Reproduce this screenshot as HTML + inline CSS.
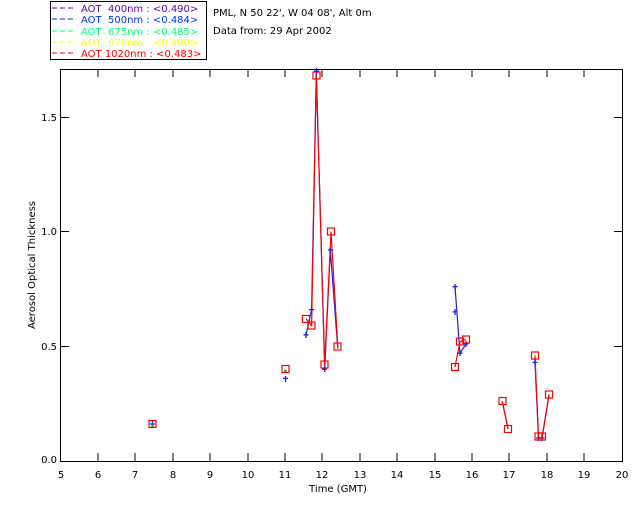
<!DOCTYPE html>
<html><head><style>
body{margin:0;background:#fff;width:640px;height:512px;overflow:hidden}
svg text{font-family:"DejaVu Sans","Liberation Sans",sans-serif;font-size:10px}
</style></head><body>
<svg width="640" height="512" xmlns="http://www.w3.org/2000/svg">
<rect x="0" y="0" width="640" height="512" fill="#fff"/>
<!-- legend -->
<rect x="50.5" y="1.5" width="156" height="58" fill="none" stroke="#000" stroke-width="1"/>
<g stroke-dasharray="5,3" stroke-width="1">
<line x1="52" y1="8" x2="75" y2="8" stroke="#6a00b0"/>
<line x1="52" y1="19" x2="75" y2="19" stroke="#0030ff"/>
<line x1="52" y1="31" x2="75" y2="31" stroke="#00ff80"/>
<line x1="52" y1="42" x2="75" y2="42" stroke="#ffff00"/>
<line x1="52" y1="53" x2="75" y2="53" stroke="#ff0000"/>
</g>
<text x="81" y="12" fill="#6a00b0" xml:space="preserve">AOT  400nm : &lt;0.490&gt;</text>
<text x="81" y="23" fill="#0030ff" xml:space="preserve">AOT  500nm : &lt;0.484&gt;</text>
<text x="81" y="35" fill="#00ff80" xml:space="preserve">AOT  675nm : &lt;0.485&gt;</text>
<text x="81" y="46" fill="#ffff00" xml:space="preserve">AOT  870nm : &lt;0.490&gt;</text>
<text x="81" y="57" fill="#ff0000" xml:space="preserve">AOT 1020nm : &lt;0.483&gt;</text>
<text x="213" y="16" fill="#000">PML, N 50 22', W 04 08', Alt 0m</text>
<text x="213" y="34" fill="#000">Data from: 29 Apr 2002</text>
<!-- axes -->
<rect x="60.5" y="69.5" width="562" height="392" fill="none" stroke="#000" stroke-width="1"/>
<g stroke="#000" stroke-width="1">
<path d="M98,461v-8M135,461v-8M173,461v-8M210,461v-8M248,461v-8M285,461v-8M322,461v-8M360,461v-8M397,461v-8M435,461v-8M472,461v-8M509,461v-8M547,461v-8M584,461v-8"/>
<path d="M98,70v7M135,70v7M173,70v7M210,70v7M248,70v7M285,70v7M322,70v7M360,70v7M397,70v7M435,70v7M472,70v7M509,70v7M547,70v7M584,70v7"/>
<path d="M61,346.5h8M61,231.5h8M61,117.5h8M622,346.5h-8M622,231.5h-8M622,117.5h-8"/>
</g>
<g fill="#000" text-anchor="middle">
<text x="61" y="478">5</text><text x="98" y="478">6</text><text x="135" y="478">7</text><text x="173" y="478">8</text><text x="210" y="478">9</text><text x="248" y="478">10</text><text x="285" y="478">11</text><text x="322" y="478">12</text><text x="360" y="478">13</text><text x="397" y="478">14</text><text x="435" y="478">15</text><text x="472" y="478">16</text><text x="509" y="478">17</text><text x="547" y="478">18</text><text x="584" y="478">19</text><text x="622" y="478">20</text>
<text x="338" y="492">Time (GMT)</text>
</g>
<g fill="#000" text-anchor="end">
<text x="57" y="463">0.0</text><text x="57" y="350">0.5</text><text x="57" y="235">1.0</text><text x="57" y="121">1.5</text>
</g>
<text transform="translate(35,265) rotate(-90)" text-anchor="middle" fill="#000" font-size="9">Aerosol Optical Thickness</text>
<!-- data -->
<g fill="none" stroke-width="1.2">
<polyline stroke="#2020e0" points="306,334.8 311.6,309.6 316.3,71 324.7,369.2 330.3,250 337.8,348.6"/>
<polyline stroke="#2020e0" points="455,286.7 460,353.2 466,344"/>
<polyline stroke="#2020e0" points="502.3,401 508,429"/>
<polyline stroke="#2020e0" points="535,362.4 538.5,438 542,438 549.1,394.5"/>
<polyline stroke="#ff0000" points="306,318.8 311.6,325.7 316.3,75.6 324.7,364.7 331,231.6 337.8,346.3"/>
<polyline stroke="#ff0000" points="455,366.9 460,341.7 466,339.4"/>
<polyline stroke="#ff0000" points="502.3,401.4 508,428.9"/>
<polyline stroke="#ff0000" points="535,355.5 538.5,438 542,438 549.1,394.5"/>
</g>
<g stroke="#2020e0" stroke-width="1.3" fill="none">
<path d="M150,424h5M152.5,421v6M283,378.4h5M285.5,376v6M303.5,334.8h5M306,332v6M309,309.6h5M311.6,307v6M314,71h5M316.5,68v6M322,369.2h5M324.7,366v6M328,250h5M330.3,247v6M452.5,311.9h5M455,309v6M452.5,286.7h5M455,284v6M457.5,353.2h5M460,350v6M463.5,344h5M466,341v6M532.5,362.4h5M535,359v6M536,438h5M538.5,435v6M539.5,438h5M542,435v6"/>
</g>
<g fill="#20c020"><circle cx="152.6" cy="426" r="1.5"/><circle cx="285.4" cy="371" r="1.5"/></g>
<g stroke="#ff0000" stroke-width="1.2" fill="none">
<rect x="149" y="420.5" width="7" height="7"/>
<rect x="282" y="365.5" width="7" height="7"/>
<rect x="302.5" y="315.5" width="7" height="7"/>
<rect x="308" y="322" width="7" height="7"/>
<rect x="313" y="72" width="7" height="7"/>
<rect x="321" y="361" width="7" height="7"/>
<rect x="327.5" y="228" width="7" height="7"/>
<rect x="334" y="343" width="7" height="7"/>
<rect x="451.5" y="363.5" width="7" height="7"/>
<rect x="456.5" y="338" width="7" height="7"/>
<rect x="462.5" y="336" width="7" height="7"/>
<rect x="499" y="397.5" width="7" height="7"/>
<rect x="504.5" y="425.5" width="7" height="7"/>
<rect x="531.5" y="352" width="7" height="7"/>
<rect x="535" y="433" width="7" height="7"/>
<rect x="538.5" y="433" width="7" height="7"/>
<rect x="545.5" y="391" width="7" height="7"/>
</g>
</svg>
</body></html>
